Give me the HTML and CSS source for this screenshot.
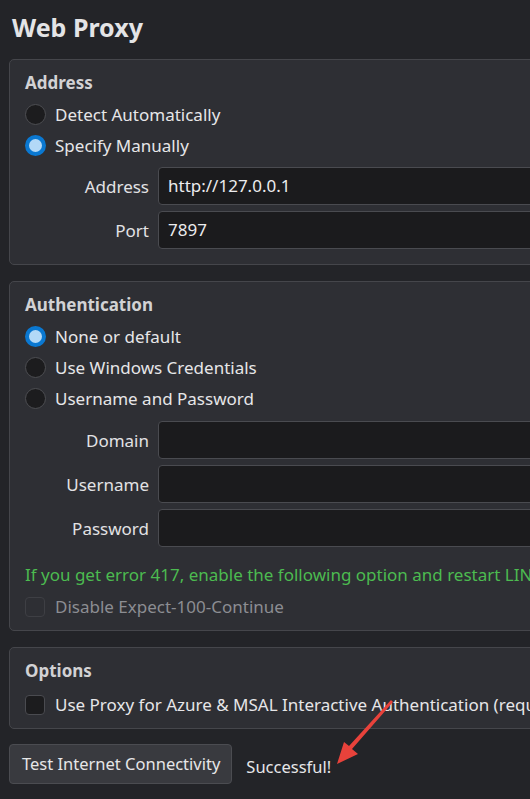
FILE: index.html
```html
<!DOCTYPE html>
<html>
<head>
<meta charset="utf-8">
<link rel="stylesheet" href="styles.css">
</head>
<body>
<div class="page">
  <h1 class="title">Web Proxy</h1>

  <section class="group g-address">
    <div class="heading">Address</div>
    <label class="radio-row"><span class="radio"></span><span>Detect Automatically</span></label>
    <label class="radio-row"><span class="radio checked"></span><span>Specify Manually</span></label>
    <div class="field first">
      <span class="flabel">Address</span>
      <div class="input">http://127.0.0.1</div>
    </div>
    <div class="field">
      <span class="flabel">Port</span>
      <div class="input">7897</div>
    </div>
  </section>

  <section class="group g-auth">
    <div class="heading">Authentication</div>
    <label class="radio-row"><span class="radio checked"></span><span>None or default</span></label>
    <label class="radio-row"><span class="radio"></span><span>Use Windows Credentials</span></label>
    <label class="radio-row"><span class="radio"></span><span>Username and Password</span></label>
    <div class="field first">
      <span class="flabel">Domain</span>
      <div class="input"></div>
    </div>
    <div class="field">
      <span class="flabel">Username</span>
      <div class="input"></div>
    </div>
    <div class="field">
      <span class="flabel">Password</span>
      <div class="input"></div>
    </div>
    <div class="note">If you get error 417, enable the following option and restart LINQPad.</div>
    <label class="check-row disabled"><span class="check"></span><span>Disable Expect-100-Continue</span></label>
  </section>

  <section class="group g-options">
    <div class="heading">Options</div>
    <label class="check-row"><span class="check"></span><span>Use Proxy for Azure &amp; MSAL Interactive Authentication (requires restart)</span></label>
  </section>

  <div class="actions">
    <button class="btn">Test Internet Connectivity</button>
    <span class="status">Successful!</span>
  </div>
</div>

<svg class="arrow" width="80" height="70" viewBox="0 0 80 70">
  <path d="M57 1 L59 3 L18 50 L24 55 L3 65 L10 43 L15 47 Z" fill="#e8423b"/>
</svg>
</body>
</html>
```

FILE: styles.css
```css
html, body {
  margin: 0;
  padding: 0;
  background: #232428;
  overflow: hidden;
}
body {
  width: 530px;
  height: 799px;
  position: relative;
  font-family: "Noto Sans", "Open Sans", sans-serif;
  color: #e6e6e8;
  font-size: 17px;
}
.page {
  width: 680px;
  padding: 0 0 0 9px;
  white-space: nowrap;
}
.title {
  margin: 0;
  padding: 9px 0 0 3px;
  height: 59px;
  box-sizing: border-box;
  font-size: 25px;
  line-height: 36px;
  font-weight: 700;
  color: #e4e4e6;
}
.group {
  background: #2e2f34;
  border: 1px solid #45464b;
  border-radius: 5px;
  padding: 11px 16px 15px 15px;
  display: flex;
  flex-direction: column;
}
.g-auth { margin-top: 16px; padding-bottom: 8px; }
.g-options { margin-top: 16px; padding-bottom: 8px; }
.heading {
  font-weight: 700;
  font-size: 17px;
  line-height: 24px;
  height: 24px;
  color: #d2d2d4;
  margin-bottom: 4px;
}
.radio-row, .check-row {
  display: flex;
  align-items: center;
  height: 31px;
  gap: 9px;
  line-height: 24px;
}
.radio {
  width: 21px;
  height: 21px;
  border-radius: 50%;
  box-sizing: border-box;
  background: #1c1c1e;
  border: 1px solid #4d4e52;
  flex: none;
}
.radio.checked {
  background: #b3d9f7;
  border: 4px solid #0a78d1;
}
.check {
  width: 20px;
  height: 20px;
  box-sizing: border-box;
  border-radius: 4px;
  background: #1c1c1e;
  border: 1px solid #4a4b50;
  flex: none;
  margin-right: 1px;
}
.check-row.disabled { color: #8c8d92; }
.check-row.disabled .check {
  background: #2e2f34;
  border-color: #3e3f44;
}
.field {
  display: flex;
  align-items: center;
  gap: 9px;
  margin-top: 6px;
}
.field.first { margin-top: 6px; }
.g-auth .field.first { margin-top: 7px; }
.flabel {
  width: 124px;
  text-align: right;
  flex: none;
  color: #e2e2e4;
}
.input {
  flex: 1;
  height: 38px;
  box-sizing: border-box;
  background: #1b1b1d;
  border: 1px solid #4a4b50;
  border-radius: 4px;
  padding: 0 9px;
  line-height: 36px;
  color: #ececee;
}
.note {
  color: #4cbb50;
  line-height: 24px;
  margin-top: 16px;
  margin-bottom: 4px;
}
.g-options .check-row { margin-top: 2px; }
.actions {
  display: flex;
  align-items: center;
  margin-top: 15px;
  gap: 14px;
}
.btn {
  font-family: inherit;
  font-size: 16.5px;
  color: #e6e6e8;
  background: #393a3f;
  border: 1px solid #4b4c51;
  border-radius: 4px;
  height: 40px;
  padding: 0 11px 0 12px;
  line-height: 38px;
}
.status { color: #e6e6e8; padding-top: 4px; font-size: 16.5px; }
.arrow {
  position: absolute;
  left: 334px;
  top: 699px;
}
```
